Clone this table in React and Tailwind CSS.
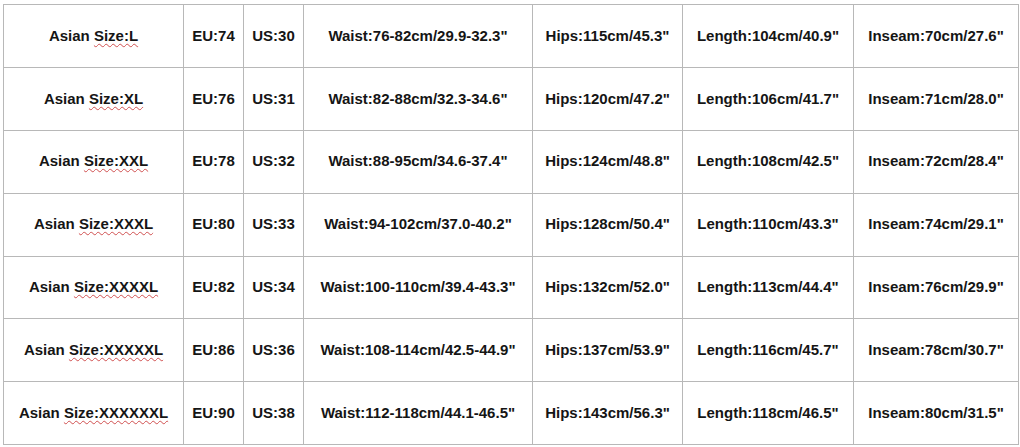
const rows = [
  ["L", "74", "30", "76-82cm/29.9-32.3\"", "115cm/45.3\"", "104cm/40.9\"", "70cm/27.6\""],
  ["XL", "76", "31", "82-88cm/32.3-34.6\"", "120cm/47.2\"", "106cm/41.7\"", "71cm/28.0\""],
  ["XXL", "78", "32", "88-95cm/34.6-37.4\"", "124cm/48.8\"", "108cm/42.5\"", "72cm/28.4\""],
  ["XXXL", "80", "33", "94-102cm/37.0-40.2\"", "128cm/50.4\"", "110cm/43.3\"", "74cm/29.1\""],
  ["XXXXL", "82", "34", "100-110cm/39.4-43.3\"", "132cm/52.0\"", "113cm/44.4\"", "76cm/29.9\""],
  ["XXXXXL", "86", "36", "108-114cm/42.5-44.9\"", "137cm/53.9\"", "116cm/45.7\"", "78cm/30.7\""],
  ["XXXXXXL", "90", "38", "112-118cm/44.1-46.5\"", "143cm/56.3\"", "118cm/46.5\"", "80cm/31.5\""],
];

const cell = "border border-[#b8b8b8] text-center align-middle p-0";

export default function App() {
  return (
    <div className="w-[1020px] h-[447px] bg-white pt-[4px] pl-[3px] font-['Liberation_Sans',Arial,sans-serif] text-[15px] font-bold text-[#151515]">
      <table className="table-fixed border-collapse w-[1015px]">
        <colgroup>
          <col className="w-[180px]" />
          <col className="w-[60px]" />
          <col className="w-[60px]" />
          <col className="w-[229px]" />
          <col className="w-[150px]" />
          <col className="w-[171px]" />
          <col className="w-[165px]" />
        </colgroup>
        <tbody>
          {rows.map((r) => (
            <tr key={r[0]} className="h-[62.9px]">
              <td className={cell}>
                Asian{" "}
                <span className="underline decoration-wavy decoration-[#d05050] decoration-1 underline-offset-2">
                  Size:{r[0]}
                </span>
              </td>
              <td className={cell}>EU:{r[1]}</td>
              <td className={cell}>US:{r[2]}</td>
              <td className={cell}>Waist:{r[3]}</td>
              <td className={cell}>Hips:{r[4]}</td>
              <td className={cell}>Length:{r[5]}</td>
              <td className={cell}>Inseam:{r[6]}</td>
            </tr>
          ))}
        </tbody>
      </table>
    </div>
  );
}
